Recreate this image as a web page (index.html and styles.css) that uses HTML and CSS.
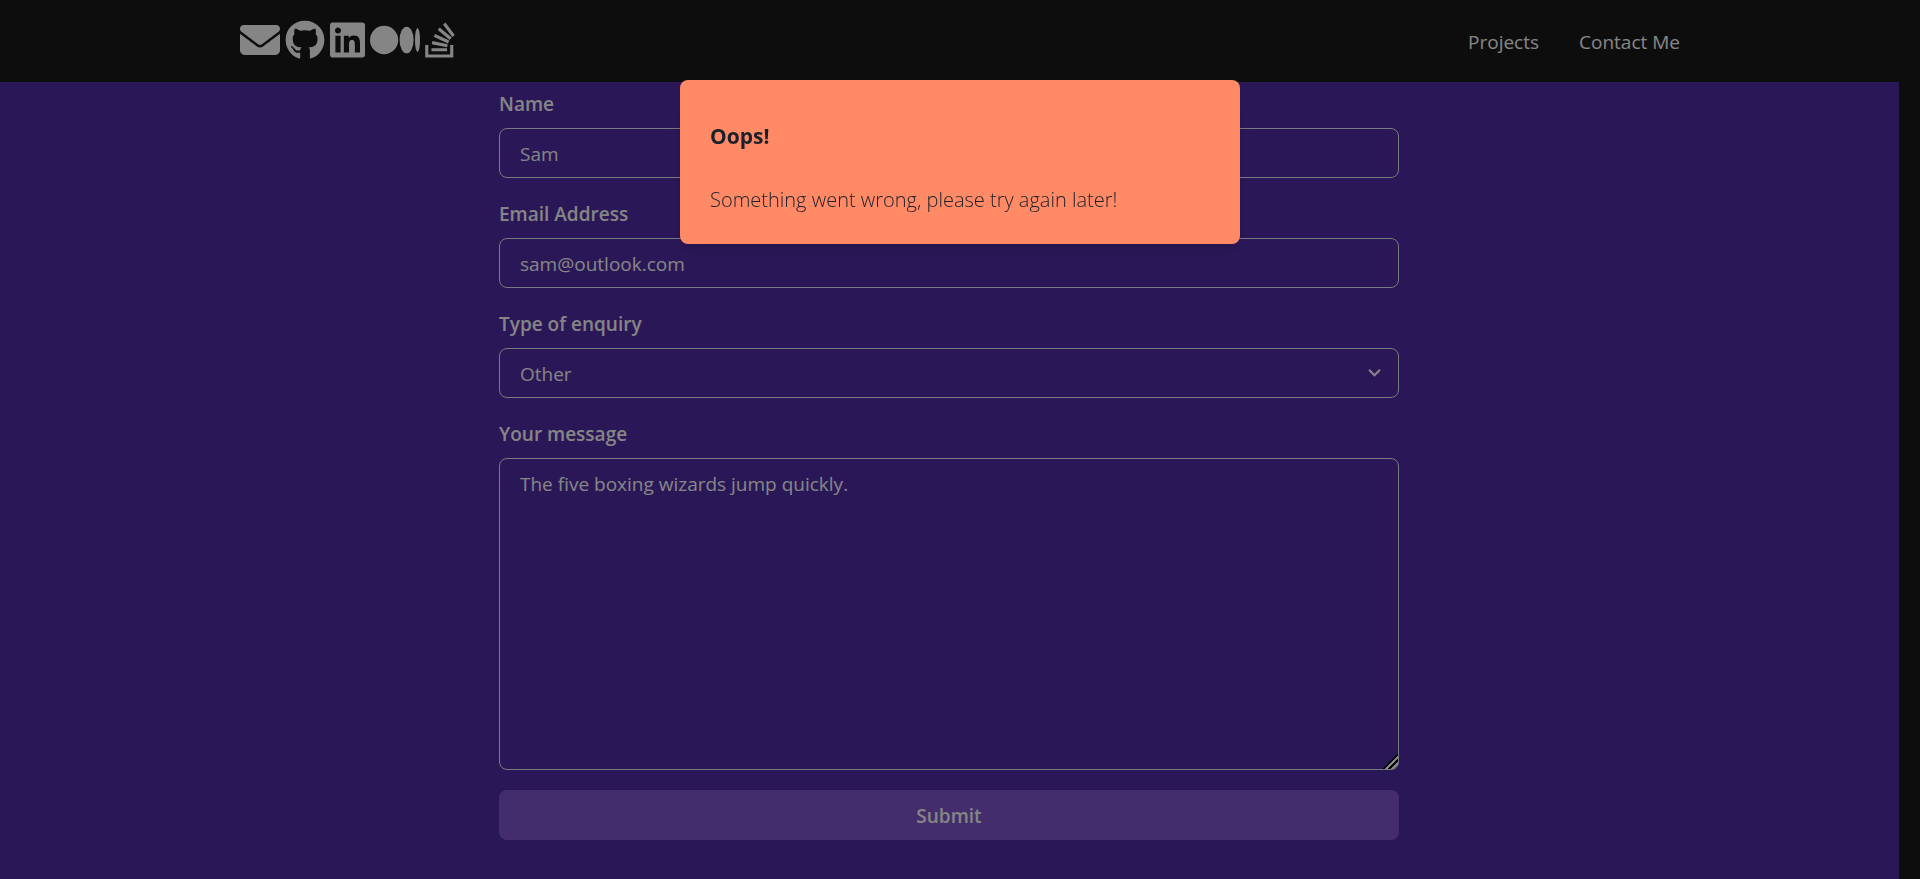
FILE: index.html
```html
<!DOCTYPE html>
<html lang="en">
<head>
<meta charset="utf-8">
<meta name="viewport" content="width=device-width, initial-scale=1">
<title>Contact Me</title>
<link rel="stylesheet" href="styles.css">
</head>
<body>
<header class="header">
  <div class="header-inner">
    <nav class="socials" aria-label="Social links">
      <a href="#" aria-label="Email"><svg class="icon" viewBox="0 0 512 512"><path d="M48 64C21.500 64 0 85.500 0 112c0 15.100 7.100 29.300 19.200 38.400L236.800 313.600c11.400 8.500 27 8.500 38.400 0L492.800 150.400c12.100-9.100 19.200-23.300 19.200-38.400c0-26.500-21.500-48-48-48H48zM0 176V384c0 35.300 28.700 64 64 64H448c35.300 0 64-28.700 64-64V176L294.400 339.200c-22.800 17.100-54 17.100-76.800 0L0 176z"/></svg></a>
      <a href="#" aria-label="GitHub"><svg class="icon icon-round" viewBox="0 0 496 512"><path d="M165.900 397.400c0 2-2.300 3.600-5.200 3.600-3.300.3-5.600-1.300-5.600-3.600 0-2 2.300-3.600 5.200-3.600 3-.3 5.600 1.300 5.600 3.600zm-31.100-4.500c-.7 2 1.300 4.300 4.300 4.900 2.600 1 5.600 0 6.200-2s-1.300-4.300-4.300-5.200c-2.600-.7-5.500.3-6.200 2.300zm44.200-1.700c-2.900.7-4.900 2.600-4.600 4.900.3 2 2.900 3.300 5.900 2.600 2.900-.7 4.900-2.600 4.600-4.600-.3-1.900-3-3.200-5.900-2.900zM244.800 8C106.100 8 0 113.300 0 252c0 110.900 69.800 205.800 169.500 239.200 12.800 2.300 17.300-5.600 17.300-12.100 0-6.200-.3-40.400-.3-61.400 0 0-70 15-84.700-29.800 0 0-11.400-29.100-27.800-36.600 0 0-22.900-15.700 1.600-15.400 0 0 24.900 2 38.600 25.800 21.900 38.600 58.600 27.500 72.900 20.900 2.300-16 8.800-27.100 16-33.700-55.900-6.200-112.300-14.300-112.300-110.500 0-27.500 7.600-41.300 23.600-58.900-2.600-6.500-11.100-33.300 2.600-67.900 20.900-6.500 69 27 69 27 20-5.600 41.500-8.500 62.800-8.500s42.800 2.900 62.800 8.500c0 0 48.100-33.600 69-27 13.700 34.700 5.200 61.400 2.600 67.900 16 17.700 25.800 31.500 25.800 58.900 0 96.500-58.900 104.200-114.800 110.500 9.200 7.900 17 22.900 17 46.400 0 33.700-.3 75.400-.3 83.600 0 6.500 4.600 14.400 17.300 12.100C428.200 457.800 496 362.900 496 252 496 113.300 383.500 8 244.800 8zM97.200 352.900c-1.300 1-1 3.300.7 5.200 1.600 1.600 3.900 2.300 5.200 1 1.300-1 1-3.300-.7-5.200-1.600-1.600-3.900-2.300-5.200-1zm-10.800-8.100c-.7 1.300.3 2.900 2.300 3.900 1.600 1 3.600.7 4.300-.7.7-1.300-.3-2.900-2.300-3.900-2-.6-3.600-.3-4.300.7zm32.400 35.600c-1.600 1.300-1 4.300 1.300 6.200 2.300 2.300 5.200 2.600 6.500 1 1.300-1.300.7-4.300-1.300-6.200-2.200-2.300-5.200-2.600-6.500-1zm-11.400-14.700c-1.600 1-1.600 3.600 0 5.900 1.600 2.300 4.300 3.300 5.600 2.300 1.600-1.300 1.600-3.900 0-6.200-1.400-2.300-4-3.300-5.600-2z"/></svg></a>
      <a href="#" aria-label="LinkedIn"><svg class="icon" viewBox="0 0 448 512"><path d="M416 32H31.900C14.300 32 0 46.500 0 64.300v383.400C0 465.500 14.300 480 31.900 480H416c17.600 0 32-14.500 32-32.300V64.300c0-17.800-14.400-32.300-32-32.300zM135.400 416H69V202.200h66.500V416zm-33.200-243c-21.300 0-38.500-17.300-38.500-38.500S80.900 96 102.200 96c21.200 0 38.500 17.300 38.500 38.500 0 21.300-17.200 38.500-38.500 38.500zm282.100 243h-66.400V312c0-24.800-.5-56.700-34.500-56.700-34.600 0-39.900 27-39.900 54.900V416h-66.400V202.200h63.700v29.200h.9c8.900-16.800 30.600-34.500 62.900-34.500 67.200 0 79.700 44.300 79.700 101.900V416z"/></svg></a>
      <a href="#" aria-label="Medium"><svg class="icon" viewBox="0 0 640 512"><ellipse cx="180.500" cy="256" rx="180.500" ry="181.700"/><ellipse cx="468.500" cy="256" rx="90" ry="171"/><ellipse cx="608" cy="256" rx="32" ry="153.300"/></svg></a>
      <a href="#" aria-label="Stack Overflow"><svg class="icon" viewBox="0 0 384 512"><path d="M290.700 311L95 269.700 86.800 309l195.700 41zm51-87L188.200 95.700l-25.500 30.800 153.500 128.300zm-31.200 39.700L129.200 179l-16.700 36.500L293.700 300zM262 32l-32 24 119.300 160.300 32-24zm20.500 328h-200v39.700h200zm39.700 80H42.700V320h-40v160h359.500V320h-40z"/></svg></a>
    </nav>
    <nav class="links" aria-label="Main">
      <a href="#projects">Projects</a>
      <a href="#contact">Contact Me</a>
    </nav>
  </div>
</header>
<main class="contact">
  <form class="form">
    <div class="field">
      <label for="name">Name</label>
      <input class="control" id="name" type="text" value="Sam">
    </div>
    <div class="field">
      <label for="email">Email Address</label>
      <input class="control" id="email" type="email" value="sam@outlook.com">
    </div>
    <div class="field">
      <label for="type">Type of enquiry</label>
      <div class="select">
        <select class="control" id="type">
          <option>Freelance project proposal</option>
          <option selected>Other</option>
        </select>
        <svg class="chevron" viewBox="0 0 24 24"><path d="M16.590 8.590L12 13.170 7.410 8.590 6 10l6 6 6-6z"/></svg>
      </div>
    </div>
    <div class="field">
      <label for="message">Your message</label>
      <textarea class="control message" id="message">The five boxing wizards jump quickly.</textarea>
    </div>
    <button class="submit" type="submit">Submit</button>
  </form>
</main>
<div class="overlay">
  <section class="dialog" role="alertdialog" aria-labelledby="dialog-title" aria-describedby="dialog-text">
    <h2 id="dialog-title">Oops!</h2>
    <p id="dialog-text">Something went wrong, please try again later!</p>
  </section>
</div>
</body>
</html>
```
FILE: styles.css
```css
* {
  box-sizing: border-box;
}

html {
  background: #1a1a1a;
}

body {
  margin: 0;
  padding-right: 21px;
  min-height: 100vh;
  display: flex;
  overflow: hidden;
  color: #fff;
  font: 19px/30px "Segoe UI", "Open Sans", "Noto Sans", sans-serif;
}

a {
  color: inherit;
  text-decoration: none;
}

.header {
  position: fixed;
  inset: 0 0 auto;
  z-index: 1;
  background: #1a1a1a;
}

.header-inner {
  display: flex;
  justify-content: space-between;
  align-items: center;
  max-width: 1600px;
  margin: 0 auto;
  padding: 20px 80px 22px;
}

.socials {
  display: flex;
  gap: 5px;
}

.socials a {
  display: flex;
}

.icon {
  height: 40px;
  min-width: 30px;
  fill: currentColor;
}

.icon-round {
  width: 40px;
}

.links {
  display: flex;
  gap: 40px;
  padding-top: 4px;
}

.contact {
  flex: 1;
  padding: 88px 21px 39px 20px;
  background: #512da8;
}

.form {
  display: flex;
  flex-direction: column;
  gap: 20px;
  max-width: 900px;
  margin: 0 auto;
}

.field {
  display: flex;
  flex-direction: column;
  gap: 8px;
}

.field label {
  padding: 1px 0;
  font-weight: 600;
  line-height: 30px;
}

.control {
  display: block;
  width: 100%;
  height: 50px;
  margin: 0;
  padding: 2px 20px 0;
  border: 1px solid #e2e8f0;
  border-radius: 8px;
  background: transparent;
  color: inherit;
  font: inherit;
  appearance: none;
}

.message {
  height: 312px;
  padding: 10px 20px;
  resize: vertical;
}

.message::-webkit-resizer {
  background: linear-gradient(135deg, transparent 48%, #000 48% 54%, #fff 54% 64%, #000 64% 76%, #fff 76% 84%, transparent 84%);
}

.select {
  position: relative;
}

.chevron {
  position: absolute;
  top: 12px;
  right: 12px;
  width: 25px;
  height: 25px;
  fill: currentColor;
  pointer-events: none;
}

.submit {
  height: 50px;
  padding: 2px 20px 0;
  border: 0;
  border-radius: 8px;
  background: #8257cf;
  color: inherit;
  font: inherit;
  font-weight: 600;
}

.overlay {
  position: fixed;
  inset: 0;
  z-index: 2;
  display: flex;
  justify-content: center;
  align-items: flex-start;
  padding: 80px 20px;
  background: rgba(0, 0, 0, 0.48);
}

.dialog {
  width: 100%;
  max-width: 560px;
  padding: 41px 30px 29px;
  border-radius: 8px;
  background: #ff8a65;
  color: #1a202c;
  box-shadow: 0 12px 19px -4px rgba(0, 0, 0, 0.1), 0 5px 8px -2px rgba(0, 0, 0, 0.05);
}

.dialog h2 {
  margin: 0 0 34px;
  font-size: 21px;
  font-weight: 700;
  line-height: 30px;
}

.dialog p {
  margin: 0;
  font-size: 20px;
  font-weight: 300;
}
```
